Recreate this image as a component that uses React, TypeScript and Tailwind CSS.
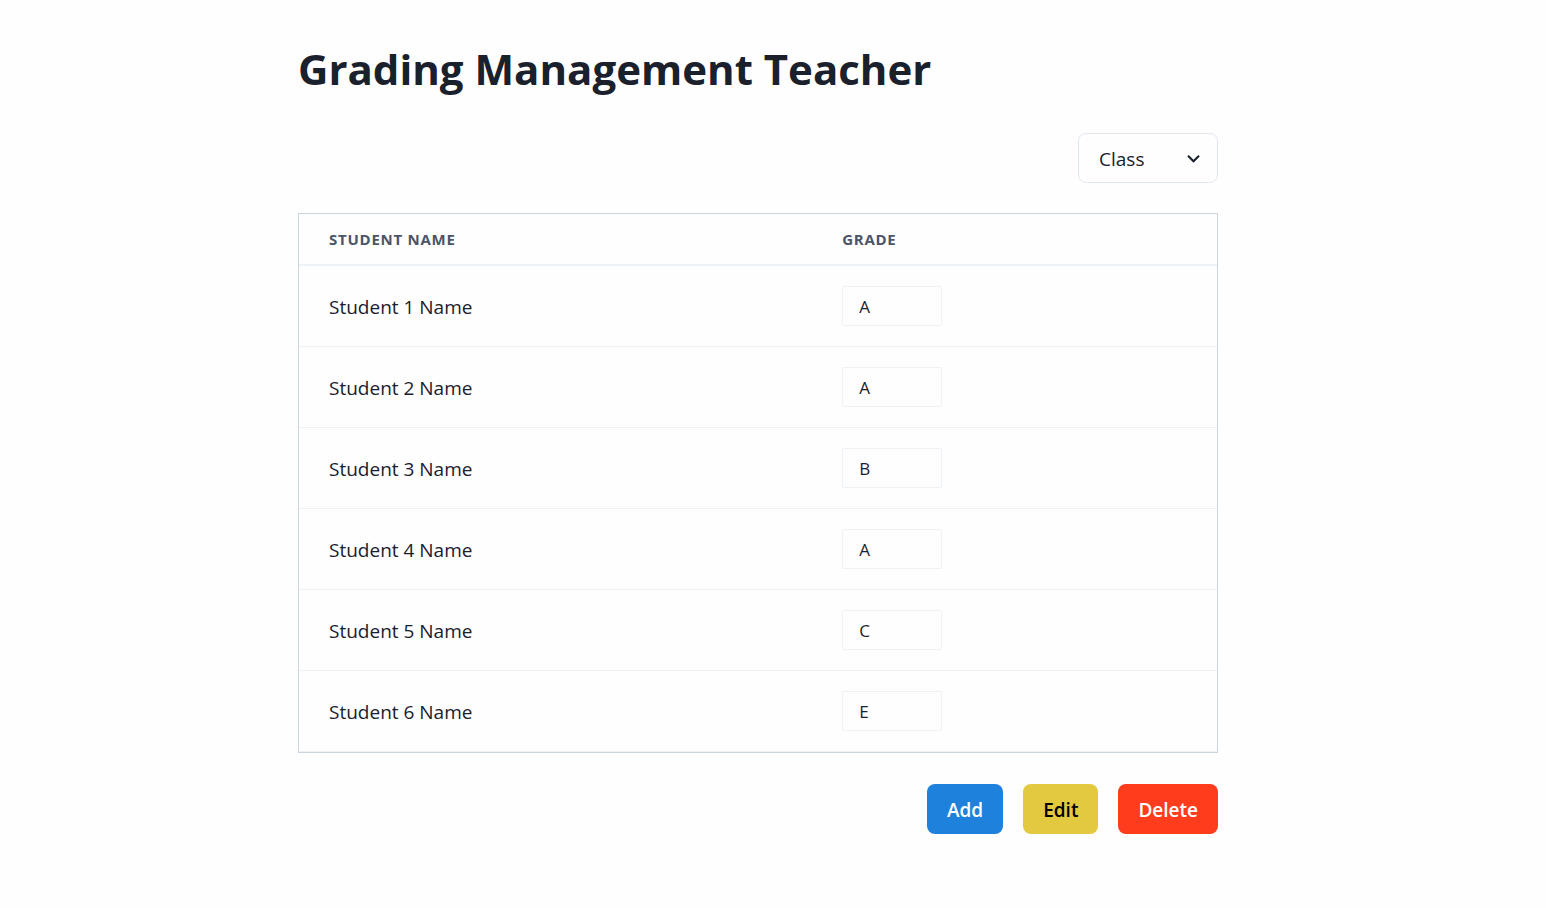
type Student = { name: string; grade: string };

const students: Student[] = [
  { name: "Student 1 Name", grade: "A" },
  { name: "Student 2 Name", grade: "A" },
  { name: "Student 3 Name", grade: "B" },
  { name: "Student 4 Name", grade: "A" },
  { name: "Student 5 Name", grade: "C" },
  { name: "Student 6 Name", grade: "E" },
];

function ClassSelect() {
  return (
    <div className="relative w-[140px]">
      <select
        aria-label="Class"
        className="h-[50px] w-full appearance-none rounded-lg border border-[#e2e8f0] bg-transparent pt-[2px] pr-10 pl-5 text-[19px] text-[#1a202c]"
      >
        <option>Class</option>
      </select>
      <svg
        viewBox="0 0 24 24"
        aria-hidden="true"
        className="pointer-events-none absolute top-[13px] right-3 size-[25px] text-[#1a202c]"
      >
        <path fill="currentColor" d="M16.59 8.59L12 13.17 7.41 8.59 6 10l6 6 6-6z" />
      </svg>
    </div>
  );
}

function GradeTable() {
  return (
    <table className="w-full table-fixed border-separate border-spacing-0 border border-[#cbd5e0] text-left">
      <thead>
        <tr className="h-[52px] text-[15px] tracking-wider text-[#4a5568] uppercase">
          <th scope="col" className="w-[55.9%] border-b-2 border-[#edf2f7] px-[30px] font-bold">
            Student Name
          </th>
          <th scope="col" className="border-b-2 border-[#edf2f7] px-[30px] font-bold">
            Grade
          </th>
        </tr>
      </thead>
      <tbody>
        {students.map((student) => (
          <tr key={student.name} className="h-[81px]">
            <td className="border-b border-[#edf2f7] px-[30px] pt-[2px] text-[19px]">
              {student.name}
            </td>
            <td className="border-b border-[#edf2f7] px-[30px]">
              <input
                type="text"
                defaultValue={student.grade}
                aria-label={`Grade for ${student.name}`}
                className="block h-10 w-[100px] rounded-xs border border-[#edf2f7] bg-transparent px-4 text-[17px]"
              />
            </td>
          </tr>
        ))}
      </tbody>
    </table>
  );
}

export default function App() {
  return (
    <div className="min-h-screen bg-[#fefefe] pr-[30px] font-['Open_Sans','Noto_Sans',sans-serif] text-[#1a202c]">
      <main className="mx-auto flex max-w-[920px] flex-col gap-[30px] pt-9 pb-[74px]">
        <h1 className="pb-[2px] text-[42px] leading-[65px] font-bold">Grading Management Teacher</h1>
        <div className="flex justify-end">
          <ClassSelect />
        </div>
        <GradeTable />
        <div className="flex justify-end gap-5 pt-px text-[19px] font-semibold">
          <button type="button" className="h-[50px] rounded-lg bg-[#1e82dc] px-5 pt-[2px] text-white">
            Add
          </button>
          <button type="button" className="h-[50px] rounded-lg bg-[#e2c940] px-5 pt-[2px] text-black">
            Edit
          </button>
          <button type="button" className="h-[50px] rounded-lg bg-[#ff3d1c] px-5 pt-[2px] text-white">
            Delete
          </button>
        </div>
      </main>
    </div>
  );
}
